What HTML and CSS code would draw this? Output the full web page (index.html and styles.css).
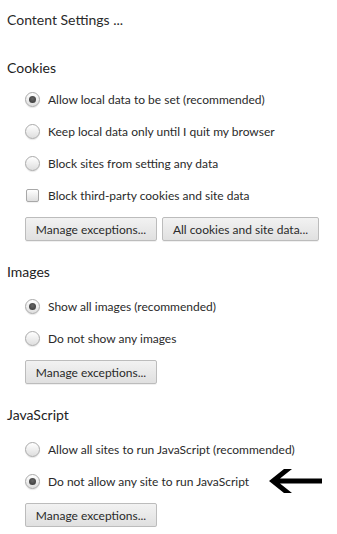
FILE: index.html
```html
<!DOCTYPE html>
<html>
<head>
<meta charset="utf-8">
<title>Content Settings</title>
<link rel="stylesheet" href="styles.css">
</head>
<body>
<div class="page">
  <div class="title">Content Settings ...</div>

  <section class="section first">
    <h2 class="heading">Cookies</h2>
    <div class="options tight">
      <div class="row"><span class="radio checked"></span><span class="label">Allow local data to be set (recommended)</span></div>
      <div class="row"><span class="radio"></span><span class="label">Keep local data only until I quit my browser</span></div>
      <div class="row"><span class="radio"></span><span class="label">Block sites from setting any data</span></div>
      <div class="row"><span class="check"></span><span class="label">Block third-party cookies and site data</span></div>
      <div class="buttons">
        <button class="btn b1">Manage exceptions...</button>
        <button class="btn b2">All cookies and site data...</button>
      </div>
    </div>
  </section>

  <section class="section">
    <h2 class="heading">Images</h2>
    <div class="options">
      <div class="row"><span class="radio checked"></span><span class="label">Show all images (recommended)</span></div>
      <div class="row"><span class="radio"></span><span class="label">Do not show any images</span></div>
      <div class="buttons">
        <button class="btn b1">Manage exceptions...</button>
      </div>
    </div>
  </section>

  <section class="section">
    <h2 class="heading">JavaScript</h2>
    <div class="options">
      <div class="row"><span class="radio"></span><span class="label">Allow all sites to run JavaScript (recommended)</span></div>
      <div class="row"><span class="radio checked"></span><span class="label">Do not allow any site to run JavaScript</span>
        <svg class="arrow" width="56" height="28" viewBox="0 0 56 28"><polygon points="2,14 17,2 25,2 13,11.5 55,11.5 55,16.5 13,16.5 25,26 17,26" fill="#000"/></svg>
      </div>
      <div class="buttons">
        <button class="btn b1">Manage exceptions...</button>
      </div>
    </div>
  </section>
</div>
</body>
</html>
```

FILE: styles.css
```css
html, body {
  margin: 0;
  padding: 0;
  background: #fff;
}
body {
  font-family: Lato, "Open Sans", "Liberation Sans", sans-serif;
  color: #2a2a2a;
  font-size: 12px;
}
.page {
  padding: 0 0 0 7px;
  width: 330px;
}
.title {
  height: 40px;
  line-height: 40px;
  font-size: 14px;
  color: #2a2a2a;
}
.section {
  margin-top: 21px;
}
.section.first {
  margin-top: 18px;
}
.heading {
  margin: 0;
  height: 20px;
  line-height: 20px;
  font-size: 14px;
  font-weight: normal;
  color: #222;
}
.options {
  padding-left: 18px;
  margin-top: 8px;
}
.options.tight {
  margin-top: 5px;
}
.row {
  display: flex;
  align-items: center;
  height: 32px;
}
.radio {
  box-sizing: border-box;
  width: 15px;
  height: 15px;
  border-radius: 50%;
  border: 1px solid #aaaaaa;
  background: linear-gradient(#ffffff, #dedede);
  box-shadow: 0 1px 1px rgba(0,0,0,0.1);
  display: flex;
  align-items: center;
  justify-content: center;
  flex: none;
}
.radio.checked::after {
  content: "";
  width: 7px;
  height: 7px;
  border-radius: 50%;
  background: radial-gradient(circle at 50% 40%, #666, #333);
}
.check {
  box-sizing: border-box;
  width: 13px;
  height: 13px;
  border-radius: 2px;
  border: 1px solid #a8a8a8;
  background: linear-gradient(#ffffff, #dedede);
  box-shadow: 0 1px 1px rgba(0,0,0,0.06);
  flex: none;
  margin-left: 1px;
  margin-right: 1px;
}
.label {
  margin-left: 8px;
  white-space: nowrap;
  color: #2a2a2a;
}
.arrow {
  margin-left: 18px;
  flex: none;
}
.buttons {
  display: flex;
  gap: 5px;
  margin-top: 6px;
}
.btn {
  box-sizing: border-box;
  height: 24px;
  padding: 0;
  font-family: inherit;
  font-size: 12px;
  color: #2a2a2a;
  border: 1px solid #bcbcbc;
  border-radius: 2px;
  background: linear-gradient(#f2f2f2, #e0e0e0);
  box-shadow: 0 1px 0 rgba(0,0,0,0.06);
  text-align: center;
}
.btn.b1 {
  width: 132px;
}
.btn.b2 {
  width: 157px;
}
```
